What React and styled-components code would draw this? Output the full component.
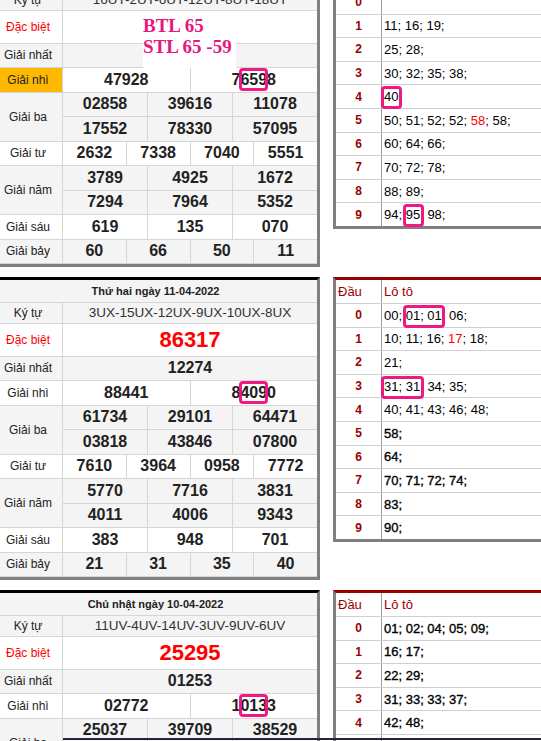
import React from 'react';
import styled, { createGlobalStyle } from 'styled-components';

const Global = createGlobalStyle`
  html, body { margin: 0; padding: 0; background: #fff; overflow: hidden; }
  body { width: 541px; height: 741px; font-family: "Liberation Sans", Arial, sans-serif; }
`;

const Page = styled.div`
  margin: -36px 0 0 -6px;
  display: flex;
  flex-direction: column;
  gap: 10px;
`;

const Block = styled.div`
  display: flex;
  align-items: flex-start;
  gap: 13px;
`;

const PrizeTable = styled.div`
  position: relative;
  flex: none;
  width: 326px;
  box-sizing: border-box;
  border-top: 3px solid #000;
  border-right: 3px solid #808080;
  border-bottom: 3px solid #808080;
  display: flex;
  flex-direction: column;
  background: #fff;
`;

const DateRow = styled.div`
  height: 22.5px;
  box-sizing: border-box;
  border-bottom: 1px solid #d6d6d6;
  background: #f4f4f4;
  display: flex;
  align-items: center;
  justify-content: center;
  font-size: 11px;
  font-weight: bold;
  color: #222;
`;

const PrizeRow = styled.div`
  display: flex;
  height: ${p => p.$h}px;
  box-sizing: border-box;
  border-bottom: 1px solid #d6d6d6;
  background: ${p => (p.$alt ? '#f4f4f4' : '#fff')};
`;

const Label = styled.div`
  flex: none;
  width: 69px;
  box-sizing: border-box;
  border-right: 1px solid #d6d6d6;
  display: flex;
  align-items: center;
  justify-content: center;
  font-size: 12px;
  color: ${p => (p.$red ? '#f00' : '#222')};
  background: ${p => (p.$hl ? '#ffb800' : 'transparent')};
`;

const Values = styled.div`
  flex: 1;
  display: flex;
  flex-direction: column;
`;

const Line = styled.div`
  flex: 1;
  display: flex;
  & + & { border-top: 1px solid #d6d6d6; }
`;

const Cell = styled.div`
  flex: 1 1 0;
  display: flex;
  align-items: center;
  justify-content: center;
  white-space: nowrap;
  font-size: ${p => (p.$kind === 'db' ? '22px' : p.$kind === 'code' ? '13.5px' : '16px')};
  font-weight: ${p => (p.$kind === 'code' ? 'normal' : 'bold')};
  color: ${p => (p.$kind === 'db' ? '#f00' : p.$kind === 'code' ? '#333' : '#222')};
  & + & { border-left: 1px solid #d6d6d6; }
`;

const Mark = styled.span`
  position: relative;
  display: inline-block;
  line-height: 18px;
  &::after {
    content: '';
    position: absolute;
    left: -1px;
    right: -1px;
    top: -3px;
    bottom: -2px;
    border: 3px solid #ee1a82;
    border-radius: 4px;
  }
`;

const LotoMark = styled.span`
  position: relative;
  display: inline-block;
  line-height: 15px;
  margin-right: 0.28em;
  &::after {
    content: '';
    position: absolute;
    left: -3px;
    right: -0.28em;
    top: -3px;
    bottom: -5px;
    border: 3px solid #ee1a82;
    border-radius: 4px;
  }
`;

const Stamp = styled.div`
  position: absolute;
  left: 149px;
  top: 45px;
  width: 93px;
  height: 56px;
  box-sizing: border-box;
  padding-top: 2.5px;
  background: #fff;
  font-family: "Liberation Serif", "Times New Roman", serif;
  font-weight: bold;
  font-size: 19px;
  line-height: 21.6px;
  color: #e8177d;
  white-space: nowrap;
`;

const LotoTable = styled.div`
  flex: none;
  width: 230px;
  box-sizing: border-box;
  border-top: 3px solid #990000;
  border-left: 3px solid #808080;
  border-bottom: 3px solid #808080;
  background: #fff;
`;

const LotoRow = styled.div`
  display: flex;
  height: ${p => (p.$head ? 23 : 23.6)}px;
  box-sizing: border-box;
  & + & { border-top: 1px solid #cfcfcf; }
`;

const Dau = styled.div`
  flex: none;
  width: 46px;
  box-sizing: border-box;
  border-right: 1px solid #9a9a9a;
  display: flex;
  align-items: center;
  justify-content: ${p => (p.$head ? 'flex-start' : 'center')};
  padding-left: ${p => (p.$head ? '2px' : '0')};
  font-size: ${p => (p.$head ? '13px' : '12px')};
  font-weight: ${p => (p.$head ? 'normal' : 'bold')};
  color: #990000;
`;

const Tail = styled.div`
  flex: 1;
  display: flex;
  align-items: center;
  padding-left: 2px;
  white-space: pre;
  font-size: 13px;
  line-height: 15px;
  color: ${p => (p.$head ? '#990000' : '#000')};
  -webkit-text-stroke: ${p => (p.$heavy ? '0.35px #000' : '0')};
`;

const Red = styled.span`
  color: #f00;
  -webkit-text-stroke-color: #f00;
`;

const EdgeLine = styled.div`
  position: fixed;
  left: 63px;
  right: 0;
  top: 738px;
  height: 2px;
  background: #1d2a36;
`;

const H = 24.5;

const day1 = {
  date: 'Thứ ba ngày 12-04-2022',
  rows: [
    { label: 'Ký tự', h: 21, kind: 'code', lines: [['16UT-2UT-6UT-12UT-8UT-18UT']] },
    { label: 'Đặc biệt', h: 33, kind: 'db', red: true, lines: [['']] },
    { label: 'Giải nhất', h: H, lines: [['']] },
    { label: 'Giải nhì', h: H, hl: true, lines: [['47928', <>7<Mark>659</Mark>8</>]] },
    { label: 'Giải ba', h: H * 2, lines: [['02858', '39616', '11078'], ['17552', '78330', '57095']] },
    { label: 'Giải tư', h: H, lines: [['2632', '7338', '7040', '5551']] },
    { label: 'Giải năm', h: H * 2, lines: [['3789', '4925', '1672'], ['7294', '7964', '5352']] },
    { label: 'Giải sáu', h: H, lines: [['619', '135', '070']] },
    { label: 'Giải bảy', h: H, lines: [['60', '66', '50', '11']] },
  ],
  stamp: ['BTL 65', 'STL 65 -59'],
  heavyFrom: 99,
  loto: [
    '',
    '11; 16; 19;',
    '25; 28;',
    '30; 32; 35; 38;',
    <><LotoMark>40</LotoMark></>,
    <>50; 51; 52; 52; <Red>58</Red>; 58;</>,
    '60; 64; 66;',
    '70; 72; 78;',
    '88; 89;',
    <>94; <LotoMark>95</LotoMark> 98;</>,
  ],
};

const day2 = {
  date: 'Thứ hai ngày 11-04-2022',
  rows: [
    { label: 'Ký tự', h: 21, kind: 'code', lines: [['3UX-15UX-12UX-9UX-10UX-8UX']] },
    { label: 'Đặc biệt', h: 33, kind: 'db', red: true, lines: [['86317']] },
    { label: 'Giải nhất', h: H, lines: [['12274']] },
    { label: 'Giải nhì', h: H, lines: [['88441', <>8<Mark>409</Mark>0</>]] },
    { label: 'Giải ba', h: H * 2, lines: [['61734', '29101', '64471'], ['03818', '43846', '07800']] },
    { label: 'Giải tư', h: H, lines: [['7610', '3964', '0958', '7772']] },
    { label: 'Giải năm', h: H * 2, lines: [['5770', '7716', '3831'], ['4011', '4006', '9343']] },
    { label: 'Giải sáu', h: H, lines: [['383', '948', '701']] },
    { label: 'Giải bảy', h: H, lines: [['21', '31', '35', '40']] },
  ],
  heavyFrom: 5,
  loto: [
    <>00; <LotoMark>01; 01</LotoMark> 06;</>,
    <>10; 11; 16; <Red>17</Red>; 18;</>,
    '21;',
    <><LotoMark>31; 31</LotoMark> 34; 35;</>,
    '40; 41; 43; 46; 48;',
    '58;',
    '64;',
    '70; 71; 72; 74;',
    '83;',
    '90;',
  ],
};

const day3 = {
  date: 'Chủ nhật ngày 10-04-2022',
  rows: [
    { label: 'Ký tự', h: 21, kind: 'code', lines: [['11UV-4UV-14UV-3UV-9UV-6UV']] },
    { label: 'Đặc biệt', h: 33, kind: 'db', red: true, lines: [['25295']] },
    { label: 'Giải nhất', h: H, lines: [['01253']] },
    { label: 'Giải nhì', h: H, lines: [['02772', <>1<Mark>013</Mark>3</>]] },
    { label: 'Giải ba', h: H * 2, lines: [['25037', '39709', '38529'], ['', '', '']] },
  ],
  heavyFrom: 0,
  loto: [
    '01; 02; 04; 05; 09;',
    '16; 17;',
    '22; 29;',
    '31; 33; 33; 37;',
    '42; 48;',
    '', '', '', '', '',
  ],
};

function Day({ d }) {
  return (
    <Block>
      <PrizeTable>
        <DateRow>{d.date}</DateRow>
        {d.rows.map((r, i) => (
          <PrizeRow key={r.label} $h={r.h} $alt={i % 2 === 0}>
            <Label $red={r.red} $hl={r.hl}>{r.label}</Label>
            <Values>
              {r.lines.map((ln, j) => (
                <Line key={j}>
                  {ln.map((c, k) => (
                    <Cell key={k} $kind={r.kind}>{c}</Cell>
                  ))}
                </Line>
              ))}
            </Values>
          </PrizeRow>
        ))}
        {d.stamp && (
          <Stamp>
            {d.stamp[0]}
            <br />
            {d.stamp[1]}
          </Stamp>
        )}
      </PrizeTable>
      <LotoTable>
        <LotoRow $head>
          <Dau $head>Đầu</Dau>
          <Tail $head>Lô tô</Tail>
        </LotoRow>
        {d.loto.map((t, i) => (
          <LotoRow key={i}>
            <Dau>{i}</Dau>
            <Tail $heavy={i >= d.heavyFrom}>{t}</Tail>
          </LotoRow>
        ))}
      </LotoTable>
    </Block>
  );
}

export default function App() {
  return (
    <>
      <Global />
      <Page>
        <Day d={day1} />
        <Day d={day2} />
        <Day d={day3} />
      </Page>
      <EdgeLine />
    </>
  );
}
